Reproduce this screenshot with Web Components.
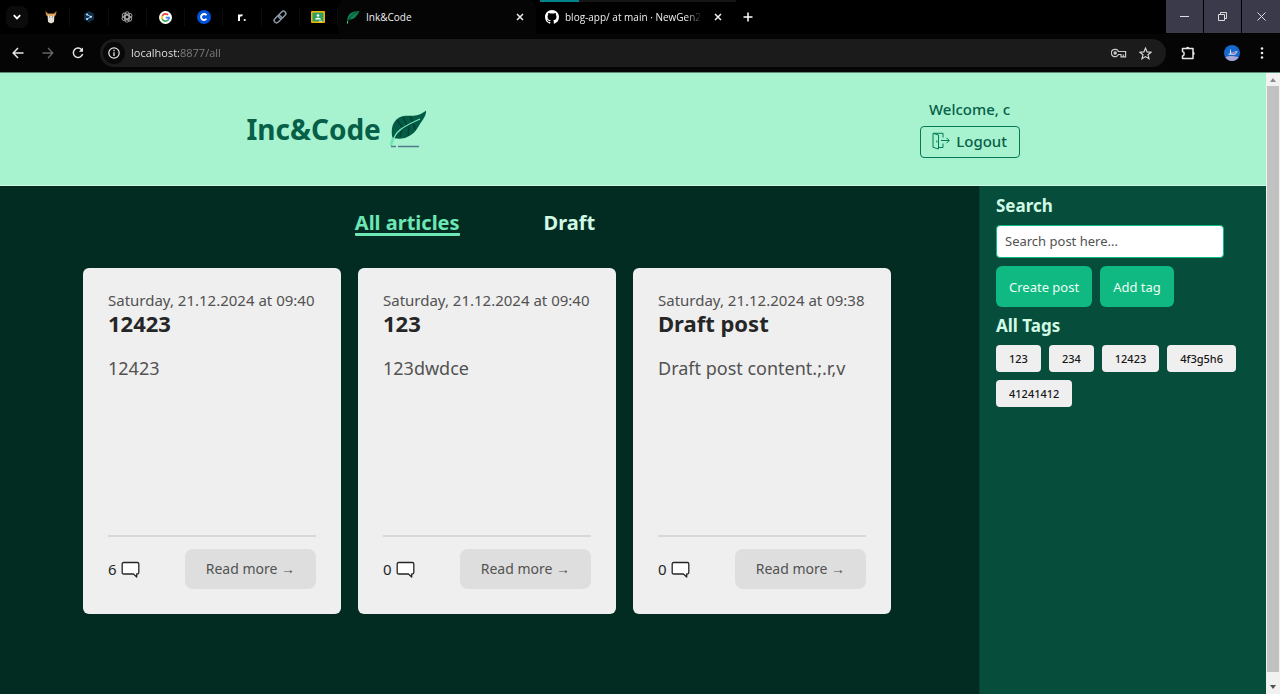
<!DOCTYPE html>
<html lang="en">
<head>
<meta charset="utf-8">
<title>Ink&amp;Code</title>
<style>
  html { height: 100%; }
  body {
    margin: 0;
    min-height: 100vh;
    display: flex;
    flex-direction: column;
    background: #022c22;
    font-family: "Noto Sans", "Open Sans", sans-serif;
    --emerald-100: #d1fae5;
    --emerald-200: #a7f3d0;
    --emerald-300: #6ee7b7;
    --emerald-500: #10b981;
    --emerald-700: #047857;
    --emerald-800: #065f46;
    --emerald-900: #064e3b;
    --emerald-950: #022c22;
  }
</style>
</head>
<body>
<tab-strip></tab-strip>
<tool-bar></tool-bar>
<page-viewport>
  <site-header user="c"></site-header>
  <blog-layout>
    <article-nav></article-nav>
    <post-grid>
      <post-card date="Saturday, 21.12.2024 at 09:40" comments="6"><span slot="title">12423</span>12423</post-card>
      <post-card date="Saturday, 21.12.2024 at 09:40" comments="0"><span slot="title">123</span>123dwdce</post-card>
      <post-card date="Saturday, 21.12.2024 at 09:38" comments="0"><span slot="title">Draft post</span>Draft post content.;.r,v</post-card>
    </post-grid>
    <side-panel slot="aside">
      <tag-button>123</tag-button>
      <tag-button>234</tag-button>
      <tag-button>12423</tag-button>
      <tag-button>4f3g5h6</tag-button>
      <tag-button>41241412</tag-button>
    </side-panel>
  </blog-layout>
</page-viewport>

<script>
const RESET = `
  :host, *, *::before, *::after { box-sizing: border-box; }
  button, input { font: inherit; color: inherit; margin: 0; }
  button { display: inline-flex; align-items: center; justify-content: center; padding: 0; border: 0; background: none; }
  a { color: inherit; text-decoration: none; }
  svg { display: block; flex: none; }
`;

function define(name, css, html) {
  customElements.define(name, class extends HTMLElement {
    constructor() {
      super();
      const root = this.attachShadow({ mode: 'open' });
      const text = typeof html === 'function' ? html(this) : html;
      root.innerHTML = `<style>${RESET}${css}</style>${text}`;
    }
  });
}

/* Window tab strip */
define('tab-strip', `
  :host { display: flex; height: 34px; background: #000; color: #f0f0f0; font: 10px/16px "Open Sans", sans-serif; }
  .menu { width: 22px; height: 22px; margin: 6px 4px 6px 6px; border-radius: 7px; background: #0b0b0b; }
  .pinned { display: flex; width: 306px; }
  .pinned button { flex: 1; border-right: 1px solid #0c0c0c; height: 18px; margin-top: 8px; }
  .tab { display: flex; align-items: center; }
  .tab span { flex: 1; min-width: 0; margin: 0 8px 0 6px; white-space: nowrap; }
  .tab button { flex: none; width: 16px; height: 16px; }
  .active { width: 198px; padding: 0 8px; background: #050505; border-radius: 8px 8px 0 0; }
  .other { width: 196px; margin-left: 4px; padding: 0 10px 2px 5px; border-top: 2px solid; border-image: linear-gradient(90deg, #00838a 40px, #151515 40px) 1; }
  .other span { -webkit-mask-image: linear-gradient(90deg, #000 88%, transparent); mask-image: linear-gradient(90deg, #000 88%, transparent); }
  .plus { width: 24px; }
  .window { display: flex; gap: 1px; margin-left: auto; height: 33px; }
  .window button { width: 37px; background: #3a3a4a; }
  .window button:last-child { width: 38px; }
`, `
  <button class="menu" aria-label="Search tabs"><svg width="10" height="8" viewBox="0 0 10 8"><path d="M1.8 2.2 5 5.4 8.2 2.2" fill="none" stroke="#fff" stroke-width="1.8"/></svg></button>
  <div class="pinned">
    <button aria-label="Pinned tab 1"><svg width="14" height="14" viewBox="0 0 14 14"><path d="M1.500 1 4 3.500h6L12.500 1 12 5l-2 1.500H4L2 5Z" fill="#c88a36"/><path d="M3.500 4.500h7L10 12l-3 1.500L4 12Z" fill="#e6dfd8"/><path d="M4.500 4h5v2h-5z" fill="#e0a85a"/><path d="M5.300 7h.8M8 7h.8" stroke="#444" stroke-width="1"/></svg></button>
    <button aria-label="Pinned tab 2"><svg width="14" height="14" viewBox="0 0 14 14"><path d="M7 1 12 3.800v5.600L8.500 11.300 7.500 13 6.500 12 2 9.400V3.800Z" fill="#0e2f4c"/><path d="M5 4.500 9 6.800 5 9" fill="none" stroke="#9fc4e4" stroke-width="1"/><circle cx="5" cy="4.500" r="1" fill="#d6eaf8"/><circle cx="9" cy="6.800" r="1" fill="#d6eaf8"/><circle cx="5" cy="9" r="1" fill="#d6eaf8"/></svg></button>
    <button aria-label="Pinned tab 3"><svg width="12" height="12" viewBox="0 0 12 12" fill="none" stroke="#a8a8a8" stroke-width=".9"><rect x="3.800" y=".8" width="4.600" height="7.400" rx="2.300"/><rect x="3.800" y=".8" width="4.600" height="7.400" rx="2.300" transform="rotate(60 6 6)"/><rect x="3.800" y=".8" width="4.600" height="7.400" rx="2.300" transform="rotate(120 6 6)"/><rect x="3.800" y=".8" width="4.600" height="7.400" rx="2.300" transform="rotate(180 6 6)"/><rect x="3.800" y=".8" width="4.600" height="7.400" rx="2.300" transform="rotate(240 6 6)"/><rect x="3.800" y=".8" width="4.600" height="7.400" rx="2.300" transform="rotate(300 6 6)"/></svg></button>
    <button aria-label="Google"><svg width="13" height="13" viewBox="0 0 14 14"><circle cx="7" cy="7" r="7" fill="#fff"/><g fill="none" stroke-width="1.900"><path d="M9.700 4.100A3.900 3.900 0 0 0 3.600 5.200" stroke="#ea4335"/><path d="M3.600 5.200a3.900 3.900 0 0 0 0 3.600" stroke="#fbbc05"/><path d="M3.600 8.800a3.900 3.900 0 0 0 6 1.100" stroke="#34a853"/><path d="M9.600 9.900A3.900 3.900 0 0 0 10.900 7.100H7.200" stroke="#4285f4"/></g></svg></button>
    <button aria-label="Pinned tab 5"><svg width="14" height="14" viewBox="0 0 14 14"><circle cx="7" cy="7" r="7" fill="#0052dc"/><path d="M9.500 5.200A3 3 0 1 0 9.500 8.800" fill="none" stroke="#fff" stroke-width="1.900"/></svg></button>
    <button aria-label="Pinned tab 6"><svg width="12" height="12" viewBox="0 0 12 12"><path d="M3 10V3.500M3 6.500C3 4.500 4.500 4 6.500 4.200" fill="none" stroke="#fff" stroke-width="2"/><circle cx="8.700" cy="9" r="1.100" fill="#fff"/></svg></button>
    <button aria-label="Pinned tab 7"><svg width="14" height="14" viewBox="0 0 14 14"><g transform="rotate(-45 7 7)" fill="none" stroke="#8c9aaa" stroke-width="1.500"><rect x="-.2" y="4.600" width="8.200" height="4.800" rx="2.400"/><rect x="6" y="4.600" width="8.200" height="4.800" rx="2.400"/></g></svg></button>
    <button aria-label="Classroom"><svg width="14" height="12" viewBox="0 0 14 12"><rect width="14" height="12" rx="1" fill="#f4b400"/><rect x="1.500" y="1.500" width="11" height="9" fill="#2fa062"/><circle cx="7" cy="4.500" r="1.300" fill="#fff"/><path d="M4 8.500c0-2.200 6-2.200 6 0z" fill="#fff"/><path d="M8 9.700h3v1H8z" fill="#eee"/></svg></button>
  </div>
  <div class="tab active">
    <svg width="14" height="14" viewBox="0 0 14 14"><path d="M1.500 13C.5 6 3 1 13.500 1 12.500 4 11 4.500 10 6.500 8.500 9 5 9.500 2.800 9.800Z" fill="#11804f"/><path d="M1.500 13C3 8 6 4 12 1.500" fill="none" stroke="#033b28" stroke-width=".8"/><path d="M1.500 13.500v-2" stroke="#59e0a8"/></svg>
    <span>Ink&amp;Code</span>
    <button aria-label="Close tab"><svg width="8" height="8" viewBox="0 0 8 8"><path d="m1 1 6 6M7 1 1 7" stroke="#eee" stroke-width="1.500"/></svg></button>
  </div>
  <div class="tab other">
    <svg width="14" height="14" viewBox="0 0 16 16"><path fill="#fff" d="M8 0c4.420 0 8 3.580 8 8a8.013 8.013 0 0 1-5.450 7.590c-.4.080-.55-.17-.55-.38 0-.27.010-1.130.010-2.200 0-.75-.25-1.230-.54-1.480 1.780-.2 3.650-.88 3.650-3.950 0-.88-.31-1.590-.82-2.150.080-.2.360-1.020-.080-2.120 0 0-.67-.22-2.200.82-.64-.18-1.320-.27-2-.27-.68 0-1.360.090-2 .27-1.530-1.030-2.200-.82-2.200-.82-.44 1.100-.16 1.920-.080 2.120-.51.560-.82 1.280-.82 2.150 0 3.060 1.860 3.750 3.640 3.950-.23.200-.44.550-.51 1.070-.46.210-1.610.55-2.330-.66-.15-.24-.6-.83-1.230-.82-.67.010-.27.380.010.530.34.190.73.900.82 1.130.16.450.68 1.310 2.690.94 0 .67.010 1.300.010 1.490 0 .21-.15.450-.55.380A7.995 7.995 0 0 1 0 8c0-4.420 3.580-8 8-8Z"/></svg>
    <span>blog-app/ at main · NewGen20</span>
    <button aria-label="Close tab"><svg width="8" height="8" viewBox="0 0 8 8"><path d="m1 1 6 6M7 1 1 7" stroke="#eee" stroke-width="1.500"/></svg></button>
  </div>
  <button class="plus" aria-label="New tab"><svg width="10" height="10" viewBox="0 0 10 10"><path d="M5 .5v9M.5 5h9" stroke="#fff" stroke-width="1.500"/></svg></button>
  <div class="window">
    <button aria-label="Minimize"><svg width="9" height="9" viewBox="0 0 9 9"><path d="M0 4.500h9" stroke="#ddd"/></svg></button>
    <button aria-label="Restore"><svg width="9" height="9" viewBox="0 0 9 9" fill="none" stroke="#ddd"><path d="M.5 2.500h6v6h-6zM2.500 2.500v-2h6v6h-2"/></svg></button>
    <button aria-label="Close"><svg width="9" height="9" viewBox="0 0 9 9"><path d="m.5.5 8 8M8.500.5l-8 8" stroke="#ddd"/></svg></button>
  </div>
`);

/* Navigation buttons and the address field */
define('tool-bar', `
  :host { display: flex; align-items: center; height: 39px; padding: 0 3px; background: #050505; border-bottom: 1px solid #5f8a77; color: #e6e6e6; font: 11px/16px "Open Sans", sans-serif; }
  .edge { width: 30px; height: 30px; }
  .address { flex: 1; display: flex; align-items: center; height: 28px; margin: 0 7px; padding: 0 7px 0 3px; border-radius: 14px; background: #1b1b1b; }
  .address button { width: 27px; height: 24px; }
  .address .info { width: 22px; height: 22px; border-radius: 11px; background: #080808; }
  input {
    flex: 1; min-width: 0; height: 20px; margin-left: 6px; padding: 0 0 2px; border: 0; outline: 0; color: #9a9a9a;
    background: linear-gradient(90deg, #ededed 49px, #808080 49px);
    -webkit-background-clip: text; background-clip: text; -webkit-text-fill-color: transparent;
  }
  .profile { margin-left: 14px; }
`, `
  <button class="edge" aria-label="Back"><svg width="12" height="12" viewBox="0 0 12 12"><path d="M11.500 6H1.500M6 1 1.200 6 6 11" fill="none" stroke="#e8e8e8" stroke-width="1.500"/></svg></button>
  <button class="edge" aria-label="Forward"><svg width="12" height="12" viewBox="0 0 12 12"><path d="M.5 6h10M6 1l4.800 5L6 11" fill="none" stroke="#666" stroke-width="1.300"/></svg></button>
  <button class="edge" aria-label="Reload"><svg width="12" height="12" viewBox="0 0 12 12"><path d="M10 3.200A4.700 4.700 0 1 0 10.600 7" fill="none" stroke="#e8e8e8" stroke-width="1.500"/><path d="M11 .6v4.200H6.800Z" fill="#e8e8e8"/></svg></button>
  <div class="address">
    <button class="info" aria-label="Site information"><svg width="12" height="12" viewBox="0 0 12 12"><circle cx="6" cy="6" r="5.200" fill="none" stroke="#e8e8e8" stroke-width="1.200"/><path d="M6 5.200V9M6 2.800v1.400" stroke="#e8e8e8" stroke-width="1.300"/></svg></button>
    <input type="text" aria-label="Address" value="localhost:8877/all" spellcheck="false">
    <button aria-label="Passwords"><svg width="16" height="10" viewBox="0 0 16 10" fill="none" stroke="#ccc" stroke-width="1.200"><path d="M7.400 3.500A3.700 3.700 0 1 0 7.400 6.500H10V8.800h4.600V3.500Z"/><circle cx="4.200" cy="5" r="1.100" fill="#ccc"/><path d="M12.300 9V6.500"/></svg></button>
    <button aria-label="Bookmark"><svg width="13" height="13" viewBox="0 0 13 13"><path d="m6.500 1.200 1.600 3.700 4 .3-3.100 2.600 1 3.900-3.500-2.100L3 11.700l1-3.900L.9 5.200l4-.3Z" fill="none" stroke="#d8d8d8" stroke-width="1.200"/></svg></button>
  </div>
  <button class="edge" aria-label="Extensions"><svg width="14" height="14" viewBox="0 0 14 14"><path d="M1.500 2.500H12v10H1.500V10C3.700 9.800 3.700 5.700 1.500 5.500Z" fill="none" stroke="#e8e8e8" stroke-width="1.500" stroke-linejoin="round"/><path d="M5 2.500a1.700 1.700 0 0 1 3.400 0ZM12 5.700a1.700 1.700 0 0 1 0 3.400Z" fill="#e8e8e8"/></svg></button>
  <button class="edge profile" aria-label="Profile"><svg width="16" height="16" viewBox="0 0 16 16"><circle cx="8" cy="8" r="8" fill="#1769cf"/><path d="M1.300 12.300C5 10 11 11 14.700 12.300A8 8 0 0 1 1.300 12.300Z" fill="#aaa6d6"/><path d="m4 9 2-1V3.500L7.500 8 12 6l2 .5L11 10H5Z" fill="#a9bce6"/><path d="m6 7 1-3v5Z" fill="#fff"/><path d="m8 8 4-1-2 2Z" fill="#b45b77"/></svg></button>
  <button class="edge" aria-label="Menu"><svg width="4" height="12" viewBox="0 0 4 12" fill="#e8e8e8"><circle cx="2" cy="1.500" r="1.300"/><circle cx="2" cy="6" r="1.300"/><circle cx="2" cy="10.500" r="1.300"/></svg></button>
`);

/* Scrollable page area with its scroll bar */
define('page-viewport', `
  :host { flex: 1; display: flex; }
  main { flex: 1; min-width: 0; display: flex; flex-direction: column; }
  .bar { width: 14px; padding: 0 1px; display: flex; flex-direction: column; align-items: center; background: #f1f1f1; }
  .bar svg { margin: 5px 0 4px; }
  .thumb { flex: 1; width: 100%; background: #c1c1c1; }
  .bar svg.down { margin: 13px 0 5px; }
`, `
  <main><slot></slot></main>
  <div class="bar">
    <svg width="6" height="4" viewBox="0 0 6 4"><path d="M3 0 6 4H0Z" fill="#8a8a8a"/></svg>
    <div class="thumb"></div>
    <svg class="down" width="6" height="4" viewBox="0 0 6 4"><path d="M3 4 6 0H0Z" fill="#505050"/></svg>
  </div>
`);

define('site-header', `
  :host { display: flex; align-items: center; justify-content: space-around; height: 113px; background: var(--emerald-200); border-bottom: 1px solid var(--emerald-100); color: var(--emerald-800); }
  .logo { display: flex; align-items: center; gap: 8px; font-weight: 700; font-size: 28px; line-height: 40px; }
  .user { display: flex; flex-direction: column; align-items: center; gap: 8px; font-weight: 500; font-size: 15px; line-height: 18px; }
  button { gap: 6px; width: 100px; height: 32px; padding-bottom: 2px; border: 1px solid var(--emerald-700); border-radius: 4px; font-weight: 500; }
`, el => `
  <a class="logo" href="/all">Inc&amp;Code
    <svg width="38" height="38" viewBox="0 0 38 38">
      <path d="M3.500 28C2 21 2.500 14 8 9 14 3.500 23 7 29 5 33 3.500 35 2 37 .5 37.500 3 36 7 33 11c-3 4-4 7-7 10.500C21 27 14 29.500 8 28.500Z" fill="#035c45"/>
      <path d="M4 27.500C7 21 14 17 28 10.500 20 18 11 17.500 7 28Z" fill="#023f31"/>
      <path d="m8 10 5 7M14 7l4 8M21 6.500l3 5.500M11 27l2-8M19 26l1-9M26 20l-1-6" stroke="#023f31" stroke-width="1.500"/>
      <path d="M4 31C6 22 13 17 31 9" fill="none" stroke="#6ee7b7" stroke-width="1.300"/>
      <path d="M1 36c0-3 .5-6 2.300-8.500L6 28C4 31 4.500 33 2.500 36Z" fill="#6ee7b7"/>
      <path d="M2 36.500h5M9 36.500h21" stroke="#52788a" stroke-width="1.400"/>
    </svg>
  </a>
  <div class="user">
    <span>Welcome, ${el.getAttribute('user')}</span>
    <button type="button">
      <svg width="18" height="18" viewBox="0 0 18 18" fill="none" stroke="#047857"><path d="M6.500 3 1 1.300v14L6.500 17ZM1 1.300h10v4.200M11 11.500v4H6.500M4.800 8.500v2M9 8.500h8M14.500 5.800l2.700 2.700-2.700 2.700"/></svg>
      Logout
    </button>
  </div>
`);

define('blog-layout', `
  :host { flex: 1; display: flex; background: var(--emerald-950); }
  section { flex: 1; padding: 26px 88px 32px 83px; }
  aside { display: flex; width: 287px; }
  ::slotted(side-panel) { flex: 1; }
`, `<section><slot></slot></section><aside><slot name="aside"></slot></aside>`);

define('article-nav', `
  :host { display: block; margin-bottom: 32px; }
  nav { display: flex; justify-content: center; gap: 84px; padding-right: 24px; color: var(--emerald-100); font-weight: 700; font-size: 20px; line-height: 21px; }
  a { border-bottom: 3px solid transparent; }
  .current { color: var(--emerald-300); border-color: var(--emerald-300); border-radius: 1px; }
`, `<nav><a class="current" href="/all" aria-current="page">All articles</a><a href="/draft">Draft</a></nav>`);

define('post-grid', `
  :host { display: grid; grid-template-columns: repeat(3, 1fr); gap: 17px; }
`, `<slot></slot>`);

define('post-card', `
  :host { display: flex; flex-direction: column; min-width: 0; min-height: 346px; padding: 22px 25px 25px; border-radius: 6px; background: #efefef; color: #262626; font-size: 15px; }
  time { color: #525252; line-height: 20px; white-space: nowrap; }
  h2 { margin: 0; font-size: 22px; line-height: 26px; }
  p { flex: 1; margin: 19px 0 0; color: #525252; font-size: 18px; line-height: 26px; }
  footer { display: flex; align-items: center; justify-content: space-between; padding-top: 12px; border-top: 2px solid #d6d9d7; }
  .count { display: flex; align-items: center; gap: 4px; }
  footer a { padding: 10px 21px; border-radius: 8px; background: #dedede; color: #525252; font-size: 14px; line-height: 20px; white-space: nowrap; }
`, el => `
  <time>${el.getAttribute('date')}</time>
  <h2><slot name="title"></slot></h2>
  <p><slot></slot></p>
  <footer>
    <span class="count">${el.getAttribute('comments')}
      <svg width="19" height="17" viewBox="0 0 19 17" role="img" aria-label="comments"><path d="M2.700 1.500h13.600q1.500 0 1.500 1.500v8.500q0 1.500-1.500 1.500h-.6v3L12.500 13H2.700q-1.500 0-1.500-1.500V3q0-1.500 1.500-1.500Z" fill="#fff" stroke="#262626" stroke-width="1.300" stroke-linejoin="round"/></svg>
    </span>
    <a href="#post">Read more →</a>
  </footer>
`);

define('side-panel', `
  :host { display: flex; flex-direction: column; gap: 8px; min-width: 0; padding: 9px 16px; border-left: 1px solid #06432f; background: var(--emerald-900); color: var(--emerald-100); }
  h2 { margin: 0; font-size: 17px; line-height: 22px; }
  input { width: 228px; height: 33px; padding: 0 8px 2px; border: 1px solid var(--emerald-500); border-radius: 4px; background: #fff; color: #404040; font-size: 13px; }
  input::placeholder { color: #525252; opacity: 1; }
  .actions, .tags { display: flex; flex-wrap: wrap; gap: 8px; }
  .actions button { height: 41px; padding: 0 13px; border-radius: 6px; background: var(--emerald-500); font-size: 13px; color: #ecfdf5; white-space: nowrap; }
`, `
  <h2><label for="q">Search</label></h2>
  <input id="q" type="search" placeholder="Search post here...">
  <div class="actions"><button type="button">Create post</button><button type="button">Add tag</button></div>
  <h2>All Tags</h2>
  <div class="tags"><slot></slot></div>
`);

define('tag-button', `
  :host { display: block; }
  button { height: 27px; padding: 0 13px; border-radius: 4px; background: #efefef; color: #171717; font-size: 11px; font-weight: 500; }
`, `<button type="button"><slot></slot></button>`);
</script>
</body>
</html>
